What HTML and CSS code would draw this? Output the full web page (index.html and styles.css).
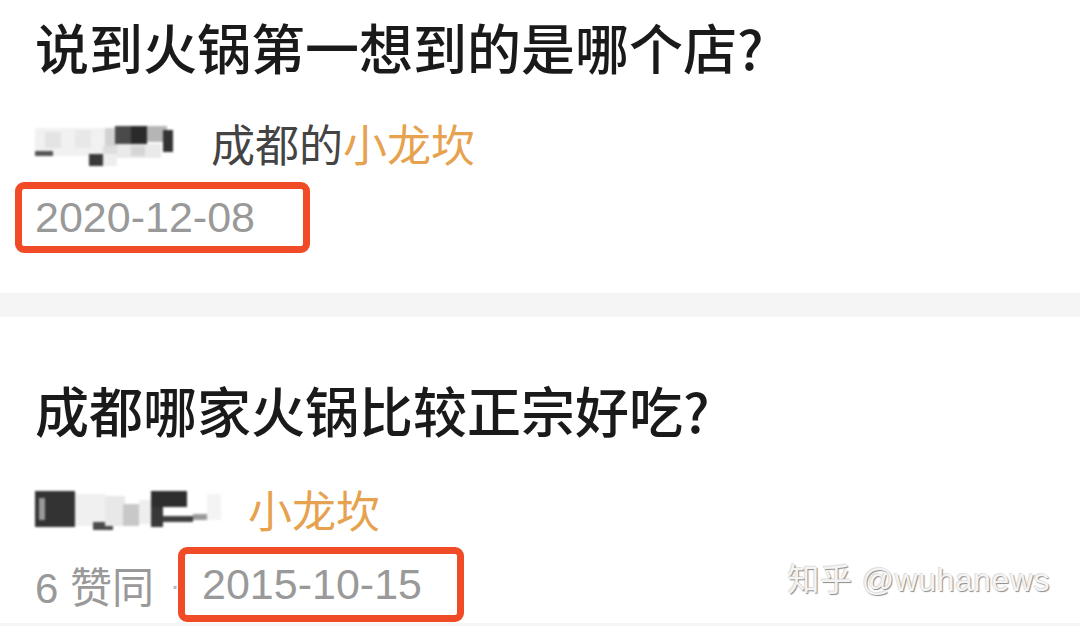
FILE: index.html
```html
<!doctype html>
<html lang="zh-CN">
    <head>
        <meta charset="utf-8">
        <link rel="stylesheet" href="styles.css">
    </head>

    <body>
        <div class="feed">
            <section class="card card-first">
                <h2 class="title">说到火锅第一想到的是哪个店?</h2>
                <div class="meta">
                    <svg class="mosaic" width="150" height="46" viewBox="0 0 150 46">
                        <rect x="0" y="8" width="70" height="28" fill="#f1f1f1"/>
                        <rect x="10" y="12" width="16" height="16" fill="#e4e4e4"/>
                        <rect x="40" y="10" width="16" height="18" fill="#e8e8e8"/>
                        <rect x="0" y="31" width="18" height="5" fill="#555"/>
                        <rect x="54" y="34" width="14" height="12" fill="#3a3a3a"/>
                        <rect x="68" y="32" width="14" height="14" fill="#eeeeee"/>
                        <rect x="70" y="8" width="16" height="18" fill="#d2d2d2"/>
                        <rect x="80" y="6" width="16" height="18" fill="#4a4a4a"/>
                        <rect x="68" y="26" width="14" height="8" fill="#dedede"/>
                        <rect x="96" y="6" width="16" height="18" fill="#2a2a2a"/>
                        <rect x="112" y="6" width="20" height="16" fill="#b5b5b5"/>
                        <rect x="128" y="10" width="10" height="22" fill="#333"/>
                        <rect x="82" y="24" width="44" height="14" fill="#eaeaea"/>
                        <rect x="96" y="26" width="14" height="10" fill="#d6d6d6"/>
                    </svg>
                    <span class="meta-text">成都的<span class="hl">小龙坎</span></span>
                </div>
                <div class="stamp stamp-first">2020-12-08</div>
            </section>

            <div class="divider"></div>

            <section class="card card-second">
                <h2 class="title">成都哪家火锅比较正宗好吃?</h2>
                <div class="meta meta-short">
                    <svg class="mosaic" width="195" height="46" viewBox="0 0 195 46">
                        <rect x="0" y="5" width="40" height="36" fill="#333"/>
                        <rect x="4" y="12" width="6" height="22" fill="#9a9a9a"/>
                        <rect x="40" y="8" width="30" height="32" fill="#f0f0f0"/>
                        <rect x="58" y="36" width="20" height="8" fill="#4a4a4a"/>
                        <rect x="70" y="10" width="20" height="30" fill="#e8e8e8"/>
                        <rect x="88" y="18" width="16" height="22" fill="#c8c8c8"/>
                        <rect x="104" y="14" width="14" height="24" fill="#eeeeee"/>
                        <rect x="116" y="5" width="36" height="16" fill="#2e2e2e"/>
                        <rect x="116" y="21" width="12" height="20" fill="#383838"/>
                        <rect x="128" y="30" width="30" height="6" fill="#3f3f3f"/>
                        <rect x="158" y="28" width="14" height="6" fill="#999"/>
                        <rect x="172" y="8" width="14" height="26" fill="#f4f4f4"/>
                    </svg>
                    <span class="hl">小龙坎</span>
                </div>
                <div class="stats">
                    <span class="votes">6 赞同</span>
                    <span class="dot">·</span>
                    <span class="stamp stamp-second">2015-10-15</span>
                </div>
            </section>

            <div class="divider divider-bottom"></div>

            <div class="watermark">知乎 @wuhanews</div>
        </div>
    </body>
</html>
```

FILE: styles.css
```css
html,
body {
    margin: 0;
    background: #fff;
}
body {
    font-family: 'Liberation Sans', 'Noto Sans CJK SC', sans-serif;
    width: 1080px;
    height: 626px;
    overflow: hidden;
}
.feed {
    position: relative;
    height: 626px;
}

.card {
    padding: 0 35px;
}
.card-first {
    padding-top: 12px;
    padding-bottom: 40px;
}
.card-second {
    padding-top: 58px;
}

.title {
    margin: 0;
    font-family: 'Noto Sans CJK SC', sans-serif;
    font-size: 54px;
    line-height: 70px;
    font-weight: 500;
    color: #1a1a1a;
}

.meta {
    display: flex;
    align-items: center;
    gap: 26px;
    height: 56px;
    margin-top: 33px;
    font-size: 44px;
    color: #444;
}
.card-second .meta {
    margin-top: 36px;
}
.meta-short {
    gap: 18px;
}
.mosaic {
    display: block;
    filter: blur(1px);
}
.hl {
    color: #e6a24e;
}

/* red outline around the dates */
.stamp {
    box-sizing: border-box;
    display: inline-block;
    border: 7px solid #f04a26;
    border-radius: 9px;
    color: #999;
    font-size: 43px;
    line-height: 57px;
}
.stamp-first {
    width: 295px;
    height: 71px;
    margin: 11px 0 0 -20px;
    padding-left: 13px;
}
.stamp-second {
    width: 286px;
    height: 75px;
    line-height: 61px;
    padding-left: 17px;
}

.stats {
    display: flex;
    align-items: center;
    margin-top: 10px;
    font-size: 42px;
    color: #999;
}
.dot {
    margin: 0 -2px 0 16px;
    font-size: 30px;
    color: #bbb;
}

.divider {
    height: 24px;
    background: #f5f5f5;
}
.divider-bottom {
    margin-top: 1px;
}

.watermark {
    position: absolute;
    right: 30px;
    top: 560px;
    font-size: 32px;
    line-height: 40px;
    color: #f4f4f4;
    text-shadow: 1px 1px 1px #8a8a8a, -1px -1px 0 #e0e0e0;
    letter-spacing: 0.5px;
}
```
